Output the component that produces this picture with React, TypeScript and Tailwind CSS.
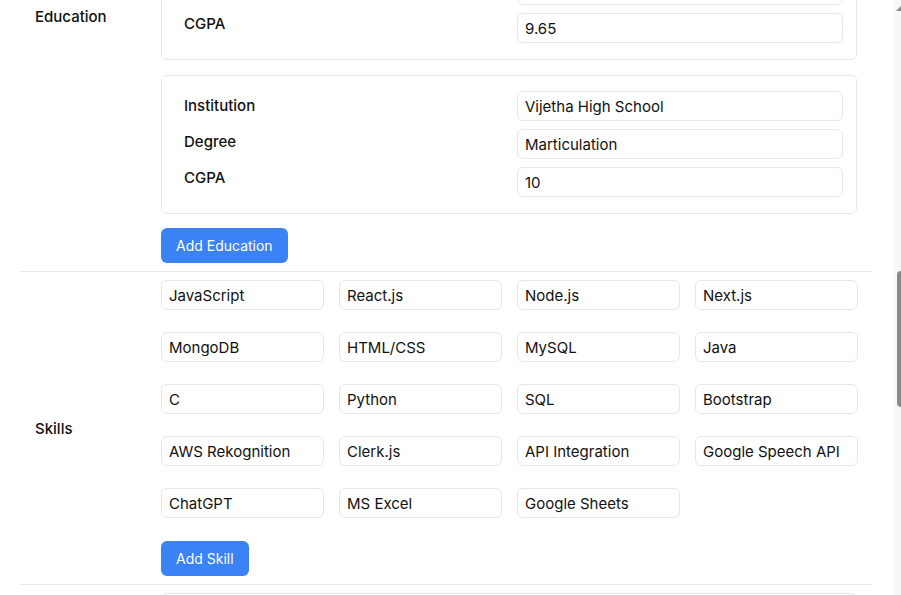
import React from "react";

const font = { fontFamily: "Inter, 'Noto Sans', sans-serif" };

type Edu = { institution: string; degree: string; cgpa: string };

const education: Edu[] = [
  { institution: "Vignan's Institute of Information Technology", degree: "B.Tech", cgpa: "8.4" },
  { institution: "Sri Chaitanya Junior College", degree: "Intermediate", cgpa: "9.65" },
  { institution: "Vijetha High School", degree: "Marticulation", cgpa: "10" },
];

const skills = [
  "JavaScript", "React.js", "Node.js", "Next.js",
  "MongoDB", "HTML/CSS", "MySQL", "Java",
  "C", "Python", "SQL", "Bootstrap",
  "AWS Rekognition", "Clerk.js", "API Integration", "Google Speech API",
  "ChatGPT", "MS Excel", "Google Sheets",
];

function Field({ value }: { value: string }) {
  return (
    <input
      readOnly
      value={value}
      className="h-[30px] w-full rounded-md border border-[#e5e7eb] bg-white pl-[7px] text-[15px] text-[#111] outline-none"
      style={font}
    />
  );
}

function Row({
  label,
  top = "pt-2",
  labelClass = "",
  children,
}: {
  label: string;
  top?: string;
  labelClass?: string;
  children: React.ReactNode;
}) {
  return (
    <div className={`flex items-center border-t border-[#e5e7eb] pr-[14px] pl-[15px] pb-2 ${top}`}>
      <div className={`w-[126px] shrink-0 text-[15px] font-medium text-[#111] ${labelClass}`}>{label}</div>
      <div className="flex-1">{children}</div>
    </div>
  );
}

function EduCard({ item }: { item: Edu }) {
  return (
    <div className="mr-px grid grid-cols-[1fr_326px] gap-4 rounded-md border border-[#e5e7eb] pt-[15px] pr-[13px] pb-[16px] pl-[15px]">
      {/* labels sit on their own rhythm */}
      <div className="flex flex-col gap-4 pt-[5px] pl-[7px] text-[15px] leading-5 font-medium text-[#111]">
        <span>Institution</span>
        <span>Degree</span>
        <span>CGPA</span>
      </div>
      <div className="flex flex-col gap-2">
        <Field value={item.institution} />
        <Field value={item.degree} />
        <Field value={item.cgpa} />
      </div>
    </div>
  );
}

function Button({ children, className = "" }: { children: React.ReactNode; className?: string }) {
  return (
    <button className={`h-[35px] w-fit rounded-md bg-[#3b82f6] px-[15px] text-sm text-white ${className}`}>
      {children}
    </button>
  );
}

export default function App() {
  return (
    <div className="flex h-[595px] overflow-hidden bg-white" style={font}>
      <div className="flex-1 overflow-hidden">
        <div className="mt-[-236px] ml-5 w-[852px]">
          <Row label="Education" top="pt-[2px]" labelClass="pt-1">
            <div className="flex flex-col gap-[15px]">
              {education.map((e) => (
                <EduCard key={e.institution} item={e} />
              ))}
              <Button className="-mt-px">Add Education</Button>
            </div>
          </Row>

          <Row label="Skills" labelClass="pt-[3px]">
            <div className="flex flex-col gap-[23px]">
              <div className="grid grid-cols-4 gap-x-[15px] gap-y-[22px]">
                {skills.map((s) => (
                  <Field key={s} value={s} />
                ))}
              </div>
              <Button>Add Skill</Button>
            </div>
          </Row>

          <Row label="Projects">
            <div className="mr-px h-[200px] rounded-md border border-[#e5e7eb]" />
          </Row>
        </div>
      </div>

      {/* scrollbar */}
      <div className="flex w-[7px] shrink-0 flex-col bg-[#f8f8f8]">
        <svg width="7" height="12" viewBox="0 0 7 12" className="shrink-0">
          <polygon points="7,6 7,11 2,11" fill="#8a8a8a" />
        </svg>
        <div className="mt-[259px] ml-auto h-[136px] w-[4px] rounded-l-sm bg-[#8a8a8a]" />
      </div>
    </div>
  );
}
